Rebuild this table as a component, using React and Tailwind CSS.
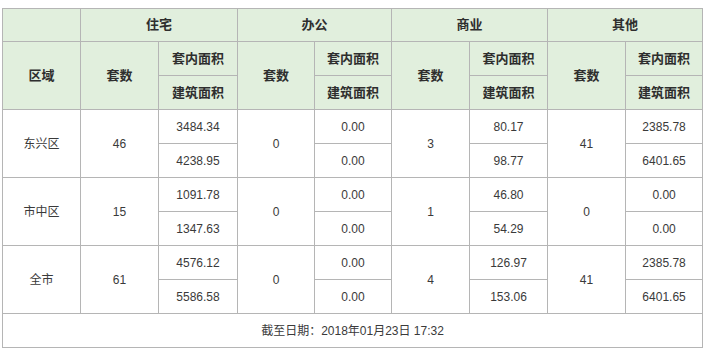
const rows = [
  { area: "东兴区", zz: ["46", "3484.34", "4238.95"], bg: ["0", "0.00", "0.00"], sy: ["3", "80.17", "98.77"], qt: ["41", "2385.78", "6401.65"] },
  { area: "市中区", zz: ["15", "1091.78", "1347.63"], bg: ["0", "0.00", "0.00"], sy: ["1", "46.80", "54.29"], qt: ["0", "0.00", "0.00"] },
  { area: "全市", zz: ["61", "4576.12", "5586.58"], bg: ["0", "0.00", "0.00"], sy: ["4", "126.97", "153.06"], qt: ["41", "2385.78", "6401.65"] },
];

const th = "border border-[#b5b5b5] bg-[#e1efdd] text-[#2e2e2e] font-bold text-[13px] text-center align-middle p-0";
const td = "border border-[#b5b5b5] text-[#3a3a3a] text-[12px] text-center align-middle p-0";

const App = () => {
  return (
    <div className="w-[711px] h-[360px] bg-white pt-[8px] pl-[2px]" style={{ fontFamily: '"Liberation Sans", Arial, "Noto Sans CJK SC", sans-serif' }}>
      <table className="w-[700px] table-fixed border-collapse">
        <colgroup>
          <col className="w-[78px]" />
          <col className="w-[78px]" />
          <col className="w-[79px]" />
          <col className="w-[77px]" />
          <col className="w-[77px]" />
          <col className="w-[78px]" />
          <col className="w-[78px]" />
          <col className="w-[78px]" />
          <col className="w-[77px]" />
        </colgroup>
        <thead>
          <tr className="h-[33px]">
            <th className={th}></th>
            <th className={th} colSpan={2}>住宅</th>
            <th className={th} colSpan={2}>办公</th>
            <th className={th} colSpan={2}>商业</th>
            <th className={th} colSpan={2}>其他</th>
          </tr>
          <tr className="h-[34px]">
            <th className={th} rowSpan={2}>区域</th>
            <th className={th} rowSpan={2}>套数</th>
            <th className={th}>套内面积</th>
            <th className={th} rowSpan={2}>套数</th>
            <th className={th}>套内面积</th>
            <th className={th} rowSpan={2}>套数</th>
            <th className={th}>套内面积</th>
            <th className={th} rowSpan={2}>套数</th>
            <th className={th}>套内面积</th>
          </tr>
          <tr className="h-[34px]">
            <th className={th}>建筑面积</th>
            <th className={th}>建筑面积</th>
            <th className={th}>建筑面积</th>
            <th className={th}>建筑面积</th>
          </tr>
        </thead>
        <tbody>
          {rows.map((r) => (
            <>
              <tr key={r.area + "a"} className="h-[34px]">
                <td className={td} rowSpan={2}>{r.area}</td>
                <td className={td} rowSpan={2}>{r.zz[0]}</td>
                <td className={td}>{r.zz[1]}</td>
                <td className={td} rowSpan={2}>{r.bg[0]}</td>
                <td className={td}>{r.bg[1]}</td>
                <td className={td} rowSpan={2}>{r.sy[0]}</td>
                <td className={td}>{r.sy[1]}</td>
                <td className={td} rowSpan={2}>{r.qt[0]}</td>
                <td className={td}>{r.qt[1]}</td>
              </tr>
              <tr key={r.area + "b"} className="h-[34px]">
                <td className={td}>{r.zz[2]}</td>
                <td className={td}>{r.bg[2]}</td>
                <td className={td}>{r.sy[2]}</td>
                <td className={td}>{r.qt[2]}</td>
              </tr>
            </>
          ))}
          <tr className="h-[34px]">
            <td className={td} colSpan={9}>截至日期：2018年01月23日 17:32</td>
          </tr>
        </tbody>
      </table>
    </div>
  );
};

export default App;
